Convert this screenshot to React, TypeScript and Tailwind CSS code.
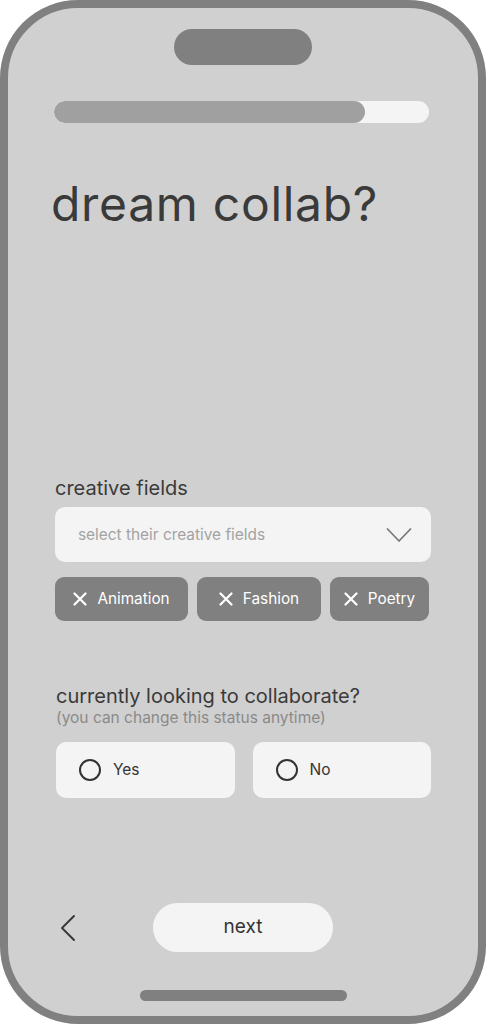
import React, { useState } from 'react';

const fields = [
  { name: 'Animation', width: 'w-[133px]' },
  { name: 'Fashion', width: 'w-[124px]' },
  { name: 'Poetry', width: 'w-[99px]' },
];

function XIcon() {
  return (
    <svg width="14" height="14" viewBox="0 0 14 14" fill="none" stroke="white" strokeWidth="2.2" strokeLinecap="round">
      <path d="M1.5 1.5 L12.5 12.5 M12.5 1.5 L1.5 12.5" />
    </svg>
  );
}

export default function App() {
  const [looking, setLooking] = useState<'yes' | 'no' | null>(null);

  return (
    <div className="w-[486px] h-[1024px] bg-white" style={{ fontFamily: 'Inter, "Noto Sans", sans-serif' }}>
      <div className="w-full h-full border-[8px] border-[#808080] rounded-[78px] bg-[#d0d0d0] flex flex-col overflow-hidden">
        {/* notch */}
        <div className="mt-[21px] mx-auto w-[138px] h-[36px] rounded-full bg-[#808080]" />

        {/* progress */}
        <div className="mt-[36px] ml-[46px] mr-[49px] h-[22px] rounded-full bg-[#f4f4f4] overflow-hidden">
          <div className="h-full w-[83%] rounded-full bg-[#a0a0a0]" />
        </div>

        <h1 className="mt-[57px] ml-[43px] text-[48px] leading-none text-[#3a3a3a] font-normal tracking-[0.7px]">
          dream collab?
        </h1>

        {/* creative fields */}
        <div className="mt-[248px] mx-[47px] flex flex-col">
          <label className="text-[20px] leading-[24px] text-[#3a3a3a]">creative fields</label>
          <button className="mt-[7px] h-[55px] rounded-[10px] bg-[#f4f4f4] flex items-center justify-between pl-[23px] pr-[19px]">
            <span className="text-[15.4px] text-[#a3a3a3]">select their creative fields</span>
            <svg width="26" height="16" viewBox="0 0 26 16" fill="none" stroke="#7a7a7a" strokeWidth="1.8" strokeLinecap="round" strokeLinejoin="round">
              <path d="M1.5 2 L13 14 L24.5 2" />
            </svg>
          </button>
          <div className="mt-[15px] flex gap-[9px]">
            {fields.map((f) => (
              <div
                key={f.name}
                className={`${f.width} h-[44px] rounded-[9px] bg-[#808080] flex items-center justify-center gap-[10px] text-white text-[15.3px]`}
              >
                <XIcon />
                <span>{f.name}</span>
              </div>
            ))}
          </div>
        </div>

        {/* collaborate */}
        <div className="mt-[63px] ml-[48px] mr-[47px] flex flex-col">
          <p className="text-[20px] leading-[24px] text-[#3a3a3a]">currently looking to collaborate?</p>
          <p className="text-[15.5px] leading-[20px] text-[#8a8a8a]">(you can change this status anytime)</p>
          <div className="mt-[14px] flex gap-[18px]">
            {(['yes', 'no'] as const).map((v) => (
              <button
                key={v}
                onClick={() => setLooking(v)}
                className="flex-1 h-[56px] rounded-[10px] bg-[#f4f4f4] flex items-center pl-[23px] gap-[12px]"
              >
                <span className="w-[22px] h-[22px] rounded-full border-2 border-[#333] flex items-center justify-center">
                  {looking === v && <span className="w-[10px] h-[10px] rounded-full bg-[#333]" />}
                </span>
                <span className="text-[15.5px] text-[#333]">{v === 'yes' ? 'Yes' : 'No'}</span>
              </button>
            ))}
          </div>
        </div>

        {/* bottom nav */}
        <div className="mt-[105px] flex items-center">
          <button className="ml-[50px] w-[20px] h-[30px] flex items-center justify-center">
            <svg width="16" height="28" viewBox="0 0 16 28" fill="none" stroke="#3a3a3a" strokeWidth="2" strokeLinecap="round" strokeLinejoin="round">
              <path d="M14 2 L2 14 L14 26" />
            </svg>
          </button>
          <button className="ml-[75px] w-[180px] h-[49px] rounded-full bg-[#f4f4f4] text-[19px] text-[#333]">
            next
          </button>
        </div>

        <div className="mt-[38px] mx-auto w-[207px] h-[11px] rounded-full bg-[#808080]" />
      </div>
    </div>
  );
}
